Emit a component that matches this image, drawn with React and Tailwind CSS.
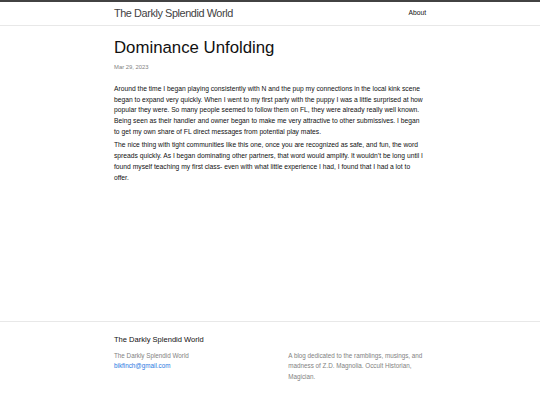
export default function App() {
  return (
    <div
      className="min-h-screen flex flex-col bg-white text-[#111111]"
      style={{ fontFamily: '"Liberation Sans", Arial, Helvetica, sans-serif' }}
    >
      <header className="border-t-[2px] border-t-[#424242] border-b border-b-[#e8e8e8] h-[26px]">
        <div className="w-[312px] mx-auto flex items-center justify-between h-full">
          <a className="text-[10.9px] tracking-[-0.42px] text-[#424242] leading-none">
            The Darkly Splendid World
          </a>
          <nav className="flex items-center text-[6.72px] leading-none">
            <a className="text-[#111111]">About</a>
          </nav>
        </div>
      </header>

      <main className="flex-1">
        <div className="w-[312px] mx-auto pt-[13.5px]">
          <h1 className="text-[16.8px] leading-none text-[#111111]">Dominance Unfolding</h1>
          <p className="mt-[6.5px] text-[5.88px] leading-[8px] text-[#828282]">Mar 29, 2023</p>
          <div className="mt-[13px] text-[6.72px] leading-[10.8px]">
            <p className="mb-[2.6px]">
              Around the time I began playing consistently with N and the pup my connections in the local kink scene began to expand very quickly. When I went to my first party with the puppy I was a little surprised at how popular they were. So many people seemed to follow them on FL, they were already really well known. Being seen as their handler and owner began to make me very attractive to other submissives. I began to get my own share of FL direct messages from potential play mates.
            </p>
            <p>
              The nice thing with tight communities like this one, once you are recognized as safe, and fun, the word spreads quickly. As I began dominating other partners, that word would amplify. It wouldn’t be long until I found myself teaching my first class- even with what little experience I had, I found that I had a lot to offer.
            </p>
          </div>
        </div>
      </main>

      <footer className="h-[84px] border-t border-t-[#e8e8e8]">
        <div className="w-[312px] mx-auto pt-[12.8px]">
          <h2 className="text-[7.56px] leading-[10.8px] text-[#111111] mb-[5.2px]">
            The Darkly Splendid World
          </h2>
          <div className="flex text-[6.3px] leading-[10.4px] text-[#828282]">
            <div className="w-[174.3px] shrink-0">
              <div>The Darkly Splendid World</div>
              <div>
                <a className="text-[#2a7ae2]">bikfinch@gmail.com</a>
              </div>
            </div>
            <div className="flex-1">
              <p>A blog dedicated to the ramblings, musings, and madness of Z.D. Magnolia. Occult Historian, Magician.</p>
            </div>
          </div>
        </div>
      </footer>
    </div>
  );
}
